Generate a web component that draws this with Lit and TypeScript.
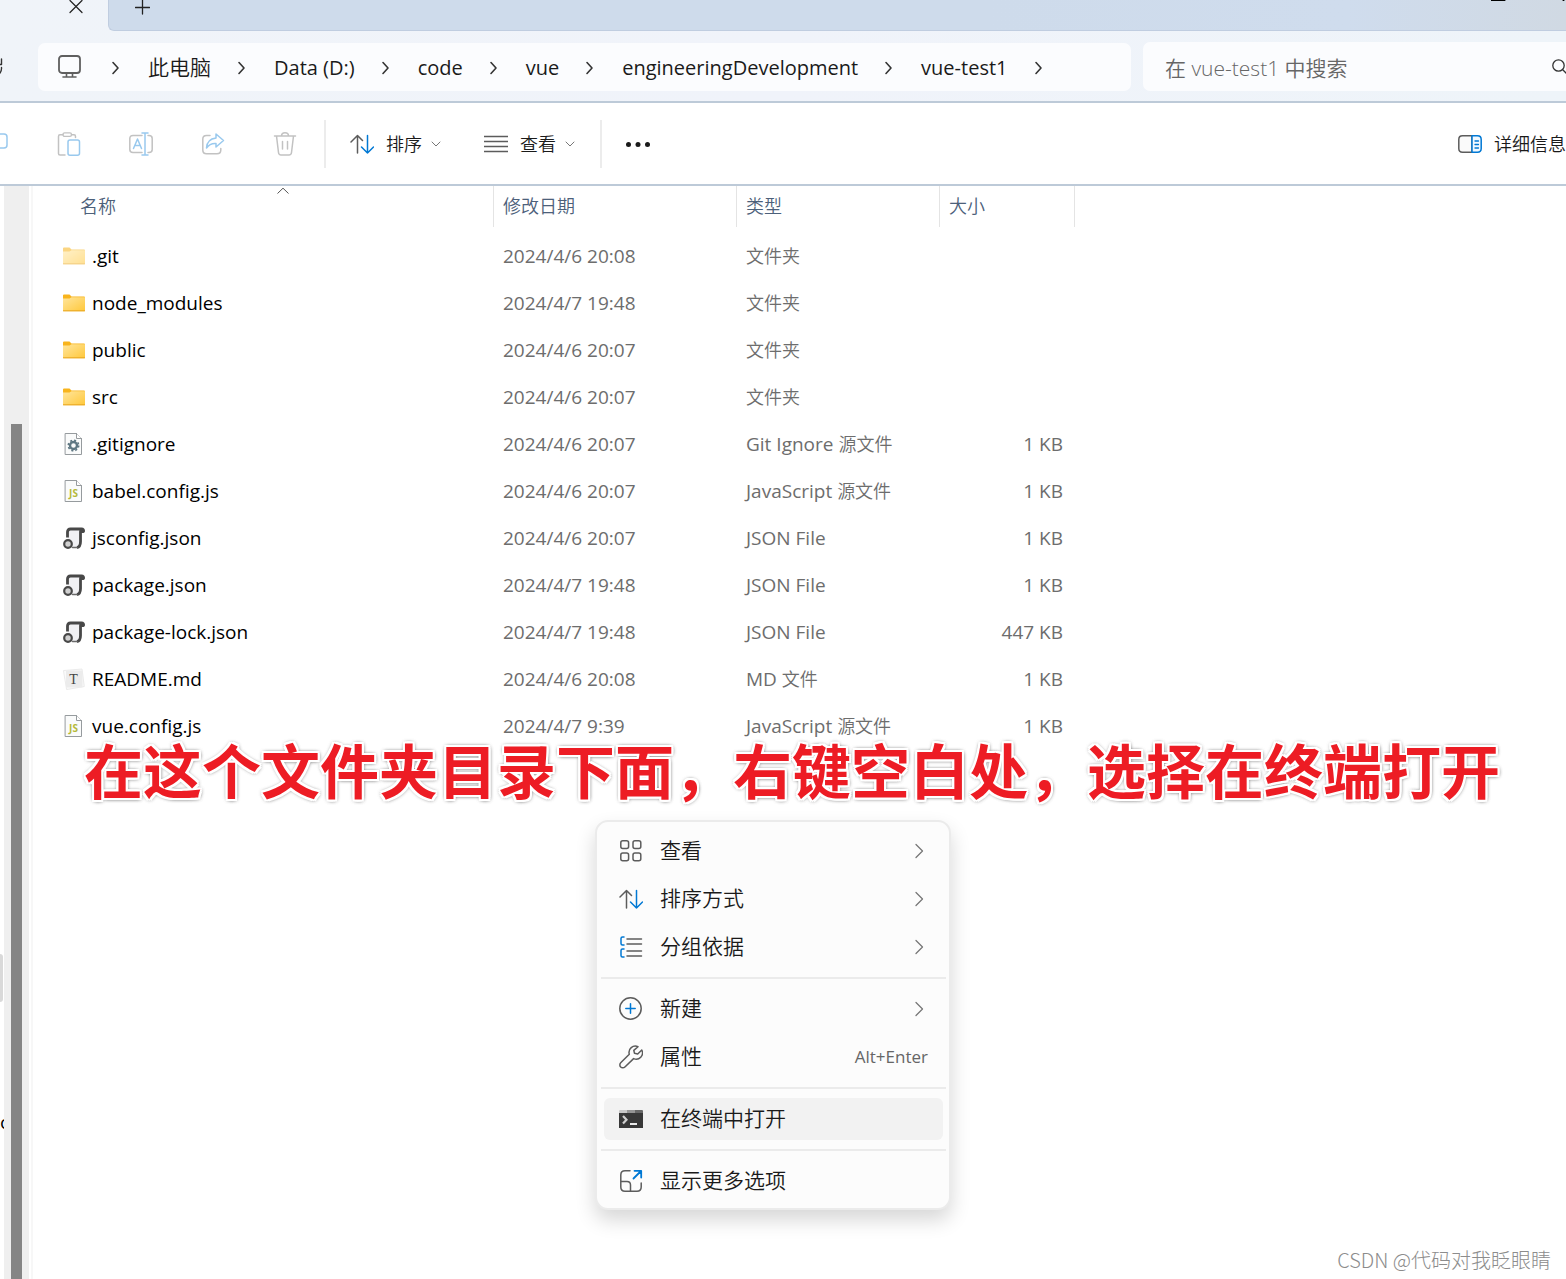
import { LitElement, html, css, svg, nothing, type TemplateResult } from "lit";
import { customElement, state } from "lit/decorators.js";
import { classMap } from "lit/directives/class-map.js";

type IconKind = "hidden-folder" | "folder" | "gear" | "js" | "json" | "md";

interface FileRow {
  icon: IconKind;
  name: string;
  date: string;
  type: string;
  size: string;
}

interface MenuEntry {
  icon: TemplateResult;
  label: string;
  submenu?: boolean;
  shortcut?: string;
  active?: boolean;
}

const FILES: FileRow[] = [
  { icon: "hidden-folder", name: ".git", date: "2024/4/6 20:08", type: "文件夹", size: "" },
  { icon: "folder", name: "node_modules", date: "2024/4/7 19:48", type: "文件夹", size: "" },
  { icon: "folder", name: "public", date: "2024/4/6 20:07", type: "文件夹", size: "" },
  { icon: "folder", name: "src", date: "2024/4/6 20:07", type: "文件夹", size: "" },
  { icon: "gear", name: ".gitignore", date: "2024/4/6 20:07", type: "Git Ignore 源文件", size: "1 KB" },
  { icon: "js", name: "babel.config.js", date: "2024/4/6 20:07", type: "JavaScript 源文件", size: "1 KB" },
  { icon: "json", name: "jsconfig.json", date: "2024/4/6 20:07", type: "JSON File", size: "1 KB" },
  { icon: "json", name: "package.json", date: "2024/4/7 19:48", type: "JSON File", size: "1 KB" },
  { icon: "json", name: "package-lock.json", date: "2024/4/7 19:48", type: "JSON File", size: "447 KB" },
  { icon: "md", name: "README.md", date: "2024/4/6 20:08", type: "MD 文件", size: "1 KB" },
  { icon: "js", name: "vue.config.js", date: "2024/4/7 9:39", type: "JavaScript 源文件", size: "1 KB" },
];

const CRUMBS = ["此电脑", "Data (D:)", "code", "vue", "engineeringDevelopment", "vue-test1"];

const icon = (content: unknown, w = 24, h = 24) => html`
  <svg width=${w} height=${h} viewBox="0 0 ${w} ${h}" fill="none" aria-hidden="true"
    stroke-linecap="round" stroke-linejoin="round">${content}</svg>`;

/** Wraps each run of Han characters so it can be sized apart from the Latin text. */
const mixed = (text: string) =>
  text.split(/([\u4e00-\u9fff]+)/).filter(Boolean).map((run) =>
    /[\u4e00-\u9fff]/.test(run) ? html`<span class="han">${run}</span>` : run);

const GREY = "#5c5c5c";
const BLUE = "#0078d4";
const DIM = "#c2c2c2";
const DIM_BLUE = "#99c9ee";

const sortIcon = icon(svg`
  <path d="M7.500 21V3.500M1 10l6.500-6.500L12.500 8.500" stroke=${GREY} stroke-width="1.500"/>
  <path d="M17.500 3.500V21M11.500 15l6 6 6-6" stroke=${BLUE} stroke-width="1.500"/>`);

const folderArt = (hidden: boolean) => {
  const id = hidden ? "fold-h" : "fold";
  return icon(svg`
    <defs><linearGradient id=${id} x1="0" y1="0" x2="1" y2="1">
      <stop offset="0" stop-color="#ffe59c"/><stop offset="1" stop-color="#ffc83a"/>
    </linearGradient></defs>
    <g opacity=${hidden ? 0.55 : 1}>
      <path d="M0 4.500V3.500a1 1 0 0 1 1-1h5.500l2 2H21a1 1 0 0 1 1 1V8H0z" fill="#f8b41c"/>
      <path d="M0 6.500h6.500l2-1.200H22V18.500a.8.8 0 0 1-.8.8H.8a.8.8 0 0 1-.8-.8z" fill="url(#${id})"/>
      <path d="M0 18.800h22" stroke="#e8a520" stroke-width="1"/>
    </g>`, 22, 22);
};

const sheet = svg`
  <path d="M2.500 .500H13.500L18.500 5.500V21.500H2.500z" fill="#fafbfb" stroke="#969b9e" stroke-linejoin="miter"/>
  <path d="M13.500 .500V5.500H18.500" fill="#fff" stroke="#969b9e" stroke-linejoin="miter"/>`;

const FILE_ICONS: Record<IconKind, TemplateResult> = {
  "hidden-folder": folderArt(true),
  folder: folderArt(false),
  gear: icon(svg`${sheet}
    <circle cx="10.500" cy="12.500" r="3.500" stroke="#5f7783" stroke-width="2.400"/>
    <circle cx="10.500" cy="12.500" r="5.200" stroke="#5f7783" stroke-width="1.600" stroke-linecap="butt" stroke-dasharray="2.040 2.040"/>`, 22, 22),
  js: icon(svg`${sheet}
    <text x="10.500" y="16.500" text-anchor="middle" font-family="Open Sans, sans-serif" font-weight="700" font-size="10" fill="#b5b93a">JS</text>`, 22, 22),
  json: icon(svg`
    <path d="M4.500 13V4.500Q4.500 1.500 7.500 1.500H18.500V15Q18.500 20 14 20H8z" fill="#f1f1f4"/>
    <path d="M4.500 10.500V5Q4.500 2 7.500 2H18.500Q21 2 20.500 4.500H17.500V14.500Q17.500 20 14 20.500" stroke="#484848" stroke-width="2.800" stroke-linecap="butt"/>
    <path d="M9.500 20.500H14" stroke="#6a6a6a" stroke-width="1.500"/>
    <circle cx="5" cy="17" r="3.800" fill="#d0d0d0" stroke="#484848" stroke-width="2.200"/>`, 22, 22),
  md: icon(svg`
    <path d="M.8 2.500L19 1l2.300 17.500L4 21.500z" fill="#fafafa" stroke="#e6e6e6" stroke-width=".8"/>
    <path d="M3 2.500H19.500V19.500H3z" fill="#ececec"/>
    <text x="10.500" y="16" text-anchor="middle" font-family="Liberation Serif, serif" font-size="14" fill="#444">T</text>`, 22, 22),
};

const MENU: MenuEntry[][] = [
  [
    {
      label: "查看",
      submenu: true,
      icon: icon(svg`<g stroke=${GREY} stroke-width="1.500">
        <rect x="1.800" y="1.800" width="7.800" height="7.800" rx="2"/><rect x="14" y="1.800" width="7.800" height="7.800" rx="2"/>
        <rect x="1.800" y="14" width="7.800" height="7.800" rx="2"/><rect x="14" y="14" width="7.800" height="7.800" rx="2"/></g>`),
    },
    { label: "排序方式", submenu: true, icon: sortIcon },
    {
      label: "分组依据",
      submenu: true,
      icon: icon(svg`
        <path d="M8 4H22.500M8 9H22.500M8 16H22.500M8 21H22.500" stroke=${GREY} stroke-width="1.500"/>
        <path d="M5 2H3.500Q2 2 2 3.500V8.500Q2 10 3.500 10H5M5 14H3.500Q2 14 2 15.500V20.500Q2 22 3.500 22H5" stroke=${BLUE} stroke-width="1.500"/>`),
    },
  ],
  [
    {
      label: "新建",
      submenu: true,
      icon: icon(svg`<circle cx="11.500" cy="11.500" r="10.700" stroke=${GREY} stroke-width="1.500"/>
        <path d="M11.500 6.800V16.200M6.800 11.500H16.200" stroke=${BLUE} stroke-width="1.500"/>`),
    },
    {
      label: "属性",
      shortcut: "Alt+Enter",
      icon: icon(svg`<path d="M19 1.700A6.300 6.300 0 0 0 10.300 9.200L1.700 17.800A2.900 2.900 0 0 0 5.900 22L14.600 13.600A6.300 6.300 0 0 0 22.800 5L18.700 9L15.500 8.200L14.800 5.400z" stroke=${GREY} stroke-width="1.500"/>`),
    },
  ],
  [
    {
      label: "在终端中打开",
      active: true,
      icon: icon(svg`
        <path d="M0 6V21H24V6z" fill="#383838"/>
        <path d="M0 6V4Q0 3 1 3H8V6z" fill="#c8c8c8"/><path d="M8 3H16V6H8z" fill="#959595"/>
        <path d="M16 3H23Q24 3 24 4V6H16z" fill="#686868"/>
        <path d="M4 9L7.500 12.800L4 16.600" stroke="#d0d0d0" stroke-width="2.200" stroke-linecap="butt" stroke-linejoin="miter"/>
        <path d="M11 17H18" stroke="#fff" stroke-width="1.800" stroke-linecap="butt"/>`),
    },
  ],
  [
    {
      label: "显示更多选项",
      icon: icon(svg`
        <path d="M11 1.800H6Q1.800 1.800 1.800 6V18Q1.800 22.200 6 22.200H18Q22.200 22.200 22.200 18V14M1.800 12.500H8Q11.500 12.500 11.500 16V22.200" stroke=${GREY} stroke-width="1.500"/>
        <path d="M15.500 1.800H22.200V8.500M22 2L14.500 9.500" stroke=${BLUE} stroke-width="1.800"/>`),
    },
  ],
];

const caretDown = icon(svg`<path d="M1 3L5 7L9 3" stroke="#777"/>`, 10, 10);

@customElement("app-root")
export class AppRoot extends LitElement {
  @state() private query = "";

  static styles = css`
    :host {
      display: flex;
      flex-direction: column;
      position: relative;
      min-height: 100vh;
      overflow: hidden;
      background: #fff;
      color: #1a1a1a;
      font-family: "Open Sans", "Noto Sans CJK SC", sans-serif;
      font-size: 18px;
      line-height: 24px;
    }
    * { box-sizing: border-box; }
    svg { display: block; flex: none; }
    button, input {
      font: inherit;
      color: inherit;
      background: none;
      border: 0;
      padding: 0;
      margin: 0;
      outline: none;
    }
    a { color: inherit; text-decoration: none; }
    .han, .drop, th, .label { font-weight: 350; }

    .chrome {
      background: linear-gradient(90deg, #f0f4f9, #f0f3fa 50%, #eef4f9);
      border-bottom: 2px solid #bdcad8;
    }
    .tabs { display: flex; height: 31px; }
    .tab { flex: none; display: flex; align-items: flex-start; width: 108px; padding-left: 69px; }
    .strip {
      flex: 1;
      display: flex;
      align-items: flex-start;
      justify-content: space-between;
      padding-left: 26px;
      background: linear-gradient(90deg, #cedbeb 60%, #cfdced 85%, #d0d9e3);
      border-bottom: 1px solid #c0cde0;
      border-left: 1px solid #c0cde0;
      border-bottom-left-radius: 6px;
    }
    .win { display: flex; gap: 56px; }

    .nav { display: flex; align-items: flex-end; gap: 12px; padding: 11px 0 10px; font-size: 20px; }
    .refresh { flex: none; align-self: center; width: 26px; }
    .address {
      flex: 1053 1 0;
      display: flex;
      align-items: center;
      gap: 28px;
      height: 48px;
      margin: 0;
      padding: 1px 20px 0;
      list-style: none;
      background: #fbfcfe;
      border-radius: 7px;
      white-space: nowrap;
    }
    .address .han { font-size: 21px; }
    .home { padding: 0 2px 2px 0; }
    .crumb { display: flex; align-items: center; gap: 26px; }
    .search {
      flex: 401 1 0;
      min-width: 0;
      display: flex;
      align-items: center;
      height: 49px;
      padding-left: 22px;
      background: #fbfcfe;
      border-radius: 7px 0 0 7px;
      font-size: 21px;
    }
    .search input { flex: 1; min-width: 0; height: 100%; padding-top: 2px; }
    .search input::placeholder { color: #666; opacity: 1; font-weight: 350; }

    .tools {
      display: flex;
      align-items: center;
      height: 83px;
      border-bottom: 2px solid #bdcad8;
      overflow: hidden;
    }
    .tool { flex: none; width: 72px; height: 48px; display: grid; place-items: center; }
    .tool.cut { width: 33px; justify-items: start; }
    .rule { flex: none; width: 2px; height: 48px; background: #ececec; }
    .rule.first { margin-left: 3px; }
    .drop { flex: none; display: flex; align-items: center; gap: 12px; margin-left: 24px; white-space: nowrap; }
    .drop .pair { display: flex; align-items: center; gap: 9px; }
    .drop.view { margin-left: 43px; margin-right: 25px; }
    .more { margin-left: 24px; }
    .drop.details { margin-left: auto; }

    .body { flex: 1; display: flex; }
    .tree { flex: none; width: 4px; padding-top: 768px; overflow: hidden; font-size: 19px; color: #000; }
    .tree-mark { width: 3px; height: 48px; background: #d9d9d9; border-radius: 0 3px 3px 0; }
    .tree-item { display: block; height: 48px; margin-top: 96px; line-height: 48px; }
    .track { flex: none; width: 25px; display: flex; flex-direction: column; padding: 238px 7px 0; background: #efefef; }
    .thumb { flex: 1; background: #858585; }
    .files { flex: 1; min-width: 0; margin-left: 2px; border-left: 2px solid #f7f7f7; }

    table { border-collapse: separate; border-spacing: 0; table-layout: fixed; width: 1042px; font-size: 19px; }
    .c-name { width: 461px; }
    .c-date { width: 243px; }
    .c-type { width: 203px; }
    .c-size { width: 135px; }
    th {
      position: relative;
      height: 41px;
      padding: 0 0 2px 9px;
      text-align: left;
      font-size: 18px;
      color: #4c607a;
      border-right: 1px solid #e4e4e4;
    }
    th.h-name { padding-left: 47px; }
    .sort-mark { position: absolute; top: 1px; left: 39px; right: 0; margin: 0 auto; }
    tbody::before { content: ""; display: block; height: 5px; }
    td { height: 47px; padding: 0 0 0 9px; color: #6d6d6d; white-space: nowrap; }
    td .han { font-size: 18px; }
    td.name { padding-left: 30px; color: #000; }
    td.size { padding-right: 12px; text-align: right; }
    .file { display: flex; align-items: center; gap: 7px; }

    .caption {
      position: absolute;
      top: 727px;
      left: 84px;
      margin: 0;
      font-family: "Noto Sans CJK SC", sans-serif;
      font-size: 59px;
      font-weight: 700;
      line-height: 84px;
      white-space: nowrap;
      color: #ed1c24;
      text-shadow: 2px 0 #fff, -2px 0 #fff, 0 2px #fff, 0 -2px #fff, 2px 2px #fff, -2px 2px #fff,
        2px -2px #fff, -2px -2px #fff, 0 0 4px #666, 0 0 4px #777, 1px 1px 4px #999;
    }

    .menu {
      position: absolute;
      top: 820px;
      left: 595px;
      width: 356px;
      padding: 5px 0 3px;
      background: #fcfcfc;
      border: 2px solid #ebebeb;
      border-radius: 13px;
      box-shadow: 0 10px 20px rgba(0, 0, 0, 0.16);
      font-size: 21px;
    }
    .group { display: flex; flex-direction: column; }
    .group + .group { position: relative; padding-top: 14px; }
    .group + .group::before {
      content: "";
      position: absolute;
      top: 6px;
      left: 4px;
      right: 3px;
      height: 2px;
      background: #ebebeb;
    }
    .item {
      display: flex;
      align-items: center;
      gap: 17px;
      height: 42px;
      margin: 3px 6px 3px 7px;
      padding: 0 15px;
      border-radius: 6px;
      text-align: left;
    }
    .item.active { background: #f2f2f2; }
    .label { flex: 1; padding-bottom: 2px; }
    .hint { font-size: 17px; color: #666; }

    .credit {
      position: absolute;
      right: 15px;
      bottom: 7px;
      font-family: "Noto Sans CJK SC", sans-serif;
      font-size: 20px;
      font-weight: 300;
      color: #8c8c8c;
    }
  `;

  private chevron() {
    return icon(svg`<path d="M2 1.500L7 7L2 12.500" stroke="#333" stroke-width="1.600"/>`, 9, 14);
  }

  private onSearch(e: Event) {
    this.query = (e.target as HTMLInputElement).value;
  }

  private renderChrome() {
    return html`
      <header class="chrome">
        <div class="tabs">
          <div class="tab">
            <button aria-label="关闭标签页">${icon(svg`<path d="M1 .500L13 12.500M13 .500L1 12.500" stroke="#222" stroke-width="1.200"/>`, 14, 14)}</button>
          </div>
          <div class="strip">
            <button aria-label="新建标签页">${icon(svg`<path d="M7.500 0V14M.500 7.500H14.500" stroke="#222" stroke-width="1.300"/>`, 15, 15)}</button>
            <div class="win">
              <button aria-label="最小化">${icon(svg`<path d="M0 .500H14" stroke="#000"/>`, 15, 2)}</button>
              <button aria-label="最大化">${icon(svg`<path d="M1 .500H2" stroke="#000"/>`, 4, 2)}</button>
            </div>
          </div>
        </div>
        <nav class="nav">
          <button class="refresh" aria-label="刷新">
            ${icon(svg`<path d="M0 6.500H1.500V1M0 15Q1.800 12.500 1.500 9.500" stroke="#333" stroke-width="1.400"/>`, 4, 18)}
          </button>
          <ol class="address" aria-label="路径">
            <li class="home">${icon(svg`<rect x="1" y="1" width="21" height="17" rx="3" stroke="#5f5f5f" stroke-width="1.800"/>
              <path d="M8.500 18V21.500M14.500 18V21.500M5 22H18" stroke="#5f5f5f" stroke-width="1.600"/>`, 23, 24)}</li>
            <li>${this.chevron()}</li>
            ${CRUMBS.map((c) => html`<li class="crumb"><a href="#">${mixed(c)}</a>${this.chevron()}</li>`)}
          </ol>
          <label class="search">
            <input type="text" aria-label="搜索" placeholder="在 vue-test1 中搜索" .value=${this.query} @input=${this.onSearch} />
            ${icon(svg`<circle cx="6.500" cy="6.500" r="5.700" stroke="#333" stroke-width="1.300"/><path d="M10.500 10.500L16 16" stroke="#333" stroke-width="1.300"/>`, 14, 16)}
          </label>
        </nav>
      </header>`;
  }

  private renderTools() {
    return html`
      <div class="tools" role="toolbar">
        <button class="tool cut" aria-label="复制">${icon(svg`<path d="M0 2H4Q7 2 7 5V13Q7 16 4 16H0" stroke=${DIM_BLUE} stroke-width="1.500"/>`, 8, 24)}</button>
        <button class="tool" aria-label="粘贴">${icon(svg`
          <path d="M6 2.800H3Q1.500 2.800 1.500 4.500V21.500Q1.500 23 3 23H8M14.500 2.800H17Q18.500 2.800 18.500 4.500V5.500" stroke=${DIM} stroke-width="1.500"/>
          <rect x="6" y=".800" width="8.500" height="3.600" rx="1.600" stroke=${DIM} stroke-width="1.300"/>
          <rect x="11" y="8" width="11.500" height="15.200" rx="2" stroke=${DIM_BLUE} stroke-width="1.500"/>`, 24, 24)}</button>
        <button class="tool" aria-label="重命名">${icon(svg`
          <path d="M13 3.500H4Q.800 3.500 .800 6.500V17.500Q.800 20.500 4 20.500H13M19 3.500H20Q23.200 3.500 23.200 6.500V17.500Q23.200 20.500 20 20.500H19" stroke=${DIM} stroke-width="1.500"/>
          <path d="M4.500 16.500L8.500 7L12.500 16.500M6 13.500H11M16 1V23M13 1H19M13 23H19" stroke=${DIM_BLUE} stroke-width="1.500"/>`)}</button>
        <button class="tool" aria-label="共享">${icon(svg`
          <path d="M9 3.500H5.500Q1.800 3.500 1.800 7V18Q1.800 21.800 5.500 21.800H16Q19.800 21.800 19.800 18V16.500" stroke=${DIM} stroke-width="1.500"/>
          <path d="M15 2L22.500 8.500L15 15V11.500Q9 11 5.500 16Q6 7 15 6z" stroke=${DIM_BLUE} stroke-width="1.500"/>`)}</button>
        <button class="tool" aria-label="删除">${icon(svg`
          <path d="M1.500 4H22.500M3.500 4L5.500 20.500Q5.800 23 8 23H16Q18.200 23 18.500 20.500L20.500 4M8.500 4Q8.500 .800 12 .800Q15.500 .800 15.500 4M9.500 9.500V17M14.500 9.500V17" stroke=${DIM} stroke-width="1.500"/>`)}</button>
        <span class="rule first"></span>
        <button class="drop">${sortIcon}<span class="pair">排序${caretDown}</span></button>
        <button class="drop view">
          ${icon(svg`<path d="M0 4.500H24M0 9.500H24M0 14.500H24M0 19.500H24" stroke=${GREY} stroke-width="1.400" stroke-linecap="butt"/>`)}
          <span class="pair">查看${caretDown}</span>
        </button>
        <span class="rule"></span>
        <button class="more" aria-label="更多">${icon(svg`<circle cx="2.500" cy="12.500" r="2.500" fill="#1a1a1a"/><circle cx="12" cy="12.500" r="2.500" fill="#1a1a1a"/><circle cx="21.500" cy="12.500" r="2.500" fill="#1a1a1a"/>`)}</button>
        <button class="drop details">
          ${icon(svg`<path d="M14 3.800H4.500Q.800 3.800 .800 7.500V16.500Q.800 20.200 4.500 20.200H14z" fill="#fafafa" stroke=${GREY} stroke-width="1.500"/>
            <path d="M14 3.800H19.500Q23.200 3.800 23.200 7.500V16.500Q23.200 20.200 19.500 20.200H14z" fill="#f2f9ff" stroke=${BLUE} stroke-width="1.500"/>
            <path d="M17 9H20.500M17 12.500H20.500M17 16H20.500" stroke=${BLUE} stroke-width="1.300"/>`)}
          <span>详细信息</span>
        </button>
      </div>`;
  }

  private renderFiles() {
    return html`
      <main class="files">
        <table>
          <colgroup><col class="c-name" /><col class="c-date" /><col class="c-type" /><col class="c-size" /></colgroup>
          <thead>
            <tr>
              <th class="h-name" scope="col" aria-sort="ascending">名称
                <svg class="sort-mark" width="12" height="8" viewBox="0 0 12 8" fill="none" aria-hidden="true"><path d="M.5 6.500L6 1.200L11.500 6.500" stroke="#555"/></svg>
              </th>
              <th scope="col">修改日期</th>
              <th scope="col">类型</th>
              <th scope="col">大小</th>
            </tr>
          </thead>
          <tbody>
            ${FILES.map((f) => html`
              <tr>
                <td class="name"><span class="file">${FILE_ICONS[f.icon]}<span>${f.name}</span></span></td>
                <td>${f.date}</td>
                <td>${mixed(f.type)}</td>
                <td class="size">${f.size}</td>
              </tr>`)}
          </tbody>
        </table>
      </main>`;
  }

  private renderMenu() {
    return html`
      <div class="menu" role="menu">
        ${MENU.map((group) => html`
          <div class="group" role="group">
            ${group.map((m) => html`
              <button role="menuitem" class=${classMap({ item: true, active: !!m.active })}>
                ${m.icon}<span class="label">${m.label}</span>
                ${m.shortcut ? html`<span class="hint">${m.shortcut}</span>` : nothing}
                ${m.submenu ? icon(svg`<path d="M1 1.500L7.500 8L1 14.500" stroke="#777" stroke-width="1.300"/>`, 13, 16) : nothing}
              </button>`)}
          </div>`)}
      </div>`;
  }

  render() {
    return html`
      ${this.renderChrome()}
      ${this.renderTools()}
      <div class="body">
        <aside class="tree"><div class="tree-mark"></div><span class="tree-item">c</span></aside>
        <div class="track"><div class="thumb"></div></div>
        ${this.renderFiles()}
      </div>
      <p class="caption">在这个文件夹目录下面，右键空白处，选择在终端打开</p>
      ${this.renderMenu()}
      <span class="credit">CSDN @代码对我眨眼睛</span>`;
  }
}
